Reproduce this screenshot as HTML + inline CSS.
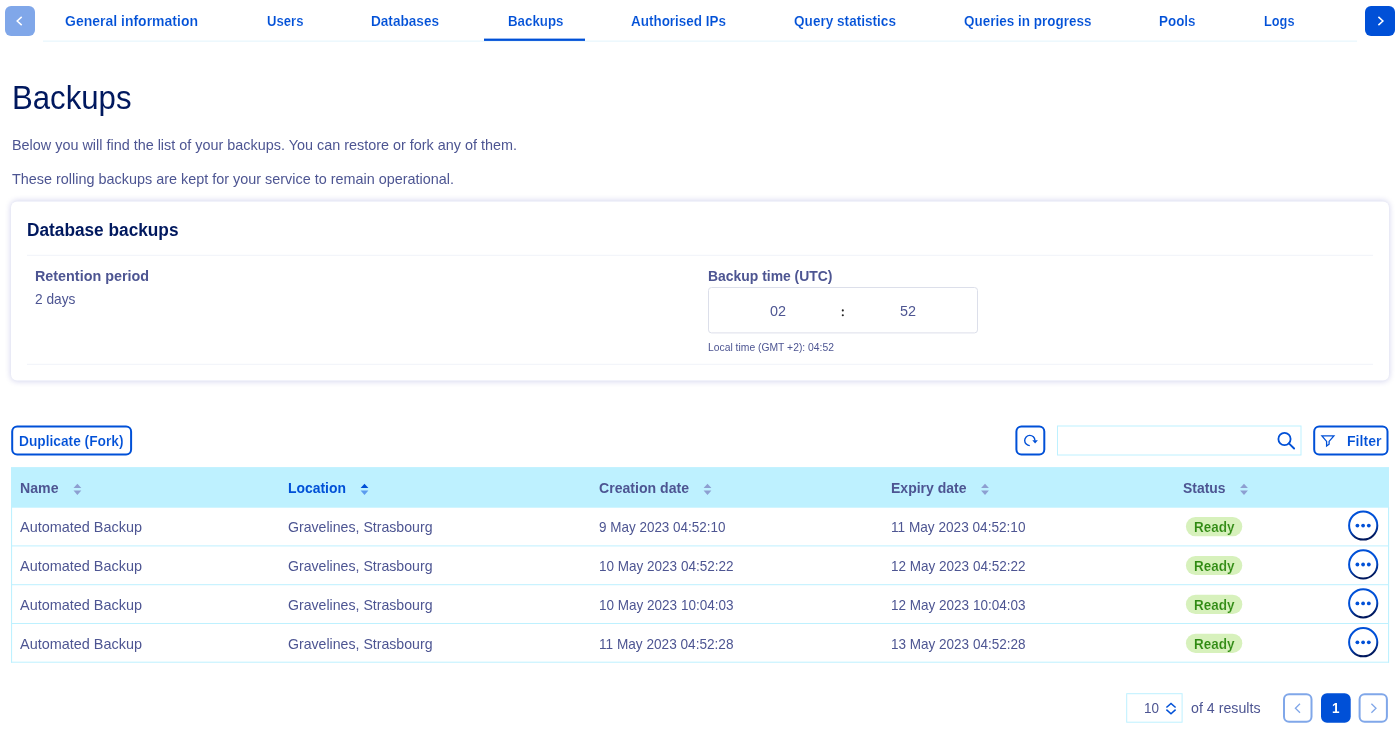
<!DOCTYPE html>
<html lang="en">
<head>
<meta charset="utf-8">
<title>Backups</title>
<style>
html,body{margin:0;padding:0;background:#fff;}
body{width:1400px;height:730px;position:relative;overflow:hidden;font-family:"Liberation Sans",sans-serif;color:#4d5592;font-size:15px;line-height:20px;}
.a{position:absolute;}
.t{position:absolute;white-space:nowrap;line-height:20px;transform-origin:0 50%;}
.txt{position:absolute;left:0;top:0;width:1400px;height:730px;will-change:transform;}
.card{left:11px;top:201px;width:1378px;height:178.6px;transform:translateY(0.6px);border-radius:6px;background:#fff;box-shadow:0 0 6px 0 rgba(0,14,156,.2);}
</style>
</head>
<body>
<!-- card with soft shadow -->
<div class="a card"></div>
<!-- shapes: nav, rules, buttons, icons, table, pagination -->
<svg class="a" style="left:0;top:0;" width="1400" height="730" viewBox="0 0 1400 730">
<defs><linearGradient id="ring" x1="0" y1="0" x2="0.25" y2="1"><stop offset="0.6" stop-color="#0050d7"/><stop offset="1" stop-color="#00185e"/></linearGradient></defs>
<rect x="43.00" y="40.40" width="1314.00" height="1.60" rx="0" fill="#edf8fd"/>
<rect x="5.00" y="6.00" width="30.00" height="30.00" rx="6" fill="#80a7e9"/>
<path d="M21.7 16.9 L17.2 21 L21.7 25.1" fill="none" stroke="#fff" stroke-width="1.5" />
<rect x="1365.00" y="6.00" width="30.00" height="30.00" rx="6" fill="#0050d7"/>
<path d="M1378.4 16.9 L1382.9 21 L1378.4 25.1" fill="none" stroke="#fff" stroke-width="1.5" />
<rect x="484.00" y="38.60" width="101.00" height="2.30" rx="0" fill="#0050d7"/>
<rect x="27.00" y="254.80" width="1346.00" height="1.00" rx="0" fill="#f0f3f9"/>
<rect x="27.00" y="363.80" width="1346.00" height="1.00" rx="0" fill="#f0f3f9"/>
<rect x="708.50" y="287.50" width="269.00" height="45.40" rx="3" fill="none" stroke="#dcdfea" stroke-width="1"/>
<circle cx="842.8" cy="310.4" r="1.05" fill="#222"/><circle cx="842.8" cy="315.2" r="1.05" fill="#222"/>
<rect x="12.20" y="426.40" width="118.90" height="28.20" rx="5" fill="none" stroke="#0050d7" stroke-width="2"/>
<rect x="1016.40" y="426.40" width="27.90" height="28.20" rx="5" fill="none" stroke="#0050d7" stroke-width="2"/>
<path d="M1029.8 445.6 A5.1 5.1 0 1 1 1034.9 440.4" fill="none" stroke="#0050d7" stroke-width="1.4" />
<path d="M1032.3 440.2 L1037.9 440.2 L1035.1 443.4 Z" fill="#0050d7"  />
<rect x="1057.50" y="426.00" width="243.50" height="29.00" rx="0" fill="none" stroke="#bef1ff" stroke-width="1"/>
<circle cx="1284.5" cy="439" r="6.1" fill="none" stroke="#0050d7" stroke-width="1.8"/>
<path d="M1288.9 443.4 L1294.1 448.5" fill="none" stroke="#0050d7" stroke-width="1.9" stroke-linecap="round"/>
<rect x="1314.20" y="426.50" width="73.30" height="28.00" rx="5" fill="none" stroke="#0050d7" stroke-width="2"/>
<path d="M1321.9 435.8 L1333.9 435.8 L1329.1 441.4 L1329.1 444.2 L1326.6 446 L1326.6 441.4 Z" fill="none" stroke="#0050d7" stroke-width="1.3" />
<rect x="11.00" y="467.10" width="1378.00" height="40.60" rx="0" fill="#bef1ff"/>
<rect x="11.00" y="545.40" width="1378.00" height="1.00" rx="0" fill="#bef1ff"/>
<rect x="11.00" y="584.20" width="1378.00" height="1.00" rx="0" fill="#bef1ff"/>
<rect x="11.00" y="623.00" width="1378.00" height="1.00" rx="0" fill="#bef1ff"/>
<rect x="11.00" y="661.70" width="1378.00" height="1.00" rx="0" fill="#bef1ff"/>
<rect x="11.00" y="507.00" width="1.10" height="155.70" rx="0" fill="#bef1ff"/>
<rect x="1388.00" y="507.00" width="1.10" height="155.70" rx="0" fill="#bef1ff"/>
<path d="M73.5 488.0 L77.4 483.7 L81.3 488.0 Z" fill="#8d9fd1"  />
<path d="M73.5 490.6 L77.4 494.9 L81.3 490.6 Z" fill="#8d9fd1"  />
<path d="M360.6 488.0 L364.5 483.7 L368.4 488.0 Z" fill="#0050d7"  />
<path d="M360.6 490.6 L364.5 494.9 L368.4 490.6 Z" fill="#5b9bef"  />
<path d="M703.6 488.0 L707.5 483.7 L711.4 488.0 Z" fill="#8d9fd1"  />
<path d="M703.6 490.6 L707.5 494.9 L711.4 490.6 Z" fill="#8d9fd1"  />
<path d="M981.1 488.0 L985.0 483.7 L988.9 488.0 Z" fill="#8d9fd1"  />
<path d="M981.1 490.6 L985.0 494.9 L988.9 490.6 Z" fill="#8d9fd1"  />
<path d="M1240.1 488.0 L1244.0 483.7 L1247.9 488.0 Z" fill="#8d9fd1"  />
<path d="M1240.1 490.6 L1244.0 494.9 L1247.9 490.6 Z" fill="#8d9fd1"  />
<rect x="1185.90" y="517.00" width="56.40" height="19.20" rx="9.6" fill="#d7f1bc"/>
<g transform="translate(1363.2,525.5)"><circle r="14.1" fill="#fff" stroke="url(#ring)" stroke-width="2"/><circle cx="-5.8" cy="0.1" r="1.9" fill="#0050d7"/><circle cx="-0.1" cy="0.1" r="1.9" fill="#0050d7"/><circle cx="5.6" cy="0.1" r="1.9" fill="#0050d7"/></g>
<rect x="1185.90" y="555.90" width="56.40" height="19.20" rx="9.6" fill="#d7f1bc"/>
<g transform="translate(1363.2,564.4)"><circle r="14.1" fill="#fff" stroke="url(#ring)" stroke-width="2"/><circle cx="-5.8" cy="0.1" r="1.9" fill="#0050d7"/><circle cx="-0.1" cy="0.1" r="1.9" fill="#0050d7"/><circle cx="5.6" cy="0.1" r="1.9" fill="#0050d7"/></g>
<rect x="1185.90" y="594.80" width="56.40" height="19.20" rx="9.6" fill="#d7f1bc"/>
<g transform="translate(1363.2,603.3)"><circle r="14.1" fill="#fff" stroke="url(#ring)" stroke-width="2"/><circle cx="-5.8" cy="0.1" r="1.9" fill="#0050d7"/><circle cx="-0.1" cy="0.1" r="1.9" fill="#0050d7"/><circle cx="5.6" cy="0.1" r="1.9" fill="#0050d7"/></g>
<rect x="1185.90" y="633.70" width="56.40" height="19.20" rx="9.6" fill="#d7f1bc"/>
<g transform="translate(1363.2,642.2)"><circle r="14.1" fill="#fff" stroke="url(#ring)" stroke-width="2"/><circle cx="-5.8" cy="0.1" r="1.9" fill="#0050d7"/><circle cx="-0.1" cy="0.1" r="1.9" fill="#0050d7"/><circle cx="5.6" cy="0.1" r="1.9" fill="#0050d7"/></g>
<rect x="1126.70" y="693.70" width="55.40" height="28.50" rx="0" fill="none" stroke="#bef1ff" stroke-width="1"/>
<path d="M1166.4 707.5 L1171 703.4 L1175.6 707.5" fill="none" stroke="#0050d7" stroke-width="1.5" />
<path d="M1166.4 709.6 L1171 713.7 L1175.6 709.6" fill="none" stroke="#0050d7" stroke-width="1.5" />
<rect x="1284.00" y="694.20" width="27.50" height="27.50" rx="5" fill="none" stroke="#80a7e9" stroke-width="2"/>
<path d="M1300 703.8 L1295.4 708.3 L1300 712.8" fill="none" stroke="#80a7e9" stroke-width="1.3" />
<rect x="1321.00" y="693.20" width="29.70" height="29.50" rx="6" fill="#0050d7"/>
<rect x="1359.60" y="694.20" width="27.30" height="27.50" rx="5" fill="none" stroke="#80a7e9" stroke-width="2"/>
<path d="M1371.4 703.8 L1376 708.3 L1371.4 712.8" fill="none" stroke="#80a7e9" stroke-width="1.3" />
</svg>
<!-- text -->
<div class="txt">
<div class="t" style="left:65.0px;top:10.50px;font-size:15px;font-weight:700;color:#0050d7;transform:scaleX(0.9331);-webkit-text-stroke:0.15px #fff;">General information</div>
<div class="t" style="left:267.0px;top:10.50px;font-size:15px;font-weight:700;color:#0050d7;transform:scaleX(0.8752);-webkit-text-stroke:0.15px #fff;">Users</div>
<div class="t" style="left:371.0px;top:10.50px;font-size:15px;font-weight:700;color:#0050d7;transform:scaleX(0.9061);-webkit-text-stroke:0.15px #fff;">Databases</div>
<div class="t" style="left:507.5px;top:10.50px;font-size:15px;font-weight:700;color:#0050d7;transform:scaleX(0.8876);-webkit-text-stroke:0.15px #fff;">Backups</div>
<div class="t" style="left:631.0px;top:10.50px;font-size:15px;font-weight:700;color:#0050d7;transform:scaleX(0.8974);-webkit-text-stroke:0.15px #fff;">Authorised IPs</div>
<div class="t" style="left:794.0px;top:10.50px;font-size:15px;font-weight:700;color:#0050d7;transform:scaleX(0.9062);-webkit-text-stroke:0.15px #fff;">Query statistics</div>
<div class="t" style="left:964.0px;top:10.50px;font-size:15px;font-weight:700;color:#0050d7;transform:scaleX(0.8997);-webkit-text-stroke:0.15px #fff;">Queries in progress</div>
<div class="t" style="left:1159.0px;top:10.50px;font-size:15px;font-weight:700;color:#0050d7;transform:scaleX(0.8936);-webkit-text-stroke:0.15px #fff;">Pools</div>
<div class="t" style="left:1264.0px;top:10.50px;font-size:15px;font-weight:700;color:#0050d7;transform:scaleX(0.8509);-webkit-text-stroke:0.15px #fff;">Logs</div>
<div class="t" style="left:11.5px;top:86.62px;font-size:33.7px;color:#00185e;transform:scaleX(0.9248);">Backups</div>
<div class="t" style="left:12.0px;top:134.90px;font-size:15px;color:#4d5592;transform:scaleX(0.9599);">Below you will find the list of your backups. You can restore or fork any of them.</div>
<div class="t" style="left:12.0px;top:168.90px;font-size:15px;color:#4d5592;transform:scaleX(0.9604);">These rolling backups are kept for your service to remain operational.</div>
<div class="t" style="left:26.5px;top:219.60px;font-size:18.75px;font-weight:700;color:#00185e;transform:scaleX(0.9200);">Database backups</div>
<div class="t" style="left:35.0px;top:265.80px;font-size:15px;font-weight:700;color:#4d5592;transform:scaleX(0.9566);">Retention period</div>
<div class="t" style="left:35.0px;top:288.60px;font-size:15px;color:#4d5592;transform:scaleX(0.9162);">2 days</div>
<div class="t" style="left:708.0px;top:265.80px;font-size:15px;font-weight:700;color:#4d5592;transform:scaleX(0.9278);">Backup time (UTC)</div>
<div class="t" style="left:770.3px;top:300.70px;font-size:15px;color:#4d5592;transform:scaleX(0.9588);">02</div>
<div class="t" style="left:900.0px;top:300.70px;font-size:15px;color:#4d5592;transform:scaleX(0.9588);">52</div>
<div class="t" style="left:708.0px;top:337.00px;font-size:11.25px;color:#4d5592;transform:scaleX(0.9194);">Local time (GMT +2): 04:52</div>
<div class="t" style="left:18.6px;top:430.90px;font-size:15px;font-weight:700;color:#0050d7;transform:scaleX(0.9152);-webkit-text-stroke:0.15px #fff;">Duplicate (Fork)</div>
<div class="t" style="left:1347.0px;top:430.90px;font-size:15px;font-weight:700;color:#0050d7;transform:scaleX(0.9404);-webkit-text-stroke:0.15px #fff;">Filter</div>
<div class="t" style="left:20.0px;top:478.10px;font-size:15px;font-weight:700;color:#4d5592;transform:scaleX(0.9423);">Name</div>
<div class="t" style="left:288.0px;top:478.10px;font-size:15px;font-weight:700;color:#0050d7;transform:scaleX(0.9280);">Location</div>
<div class="t" style="left:599.0px;top:478.10px;font-size:15px;font-weight:700;color:#4d5592;transform:scaleX(0.9389);">Creation date</div>
<div class="t" style="left:891.0px;top:478.10px;font-size:15px;font-weight:700;color:#4d5592;transform:scaleX(0.9335);">Expiry date</div>
<div class="t" style="left:1183.0px;top:478.10px;font-size:15px;font-weight:700;color:#4d5592;transform:scaleX(0.9271);">Status</div>
<div class="t" style="left:20.0px;top:516.80px;font-size:15px;color:#4d5592;transform:scaleX(0.9625);">Automated Backup</div>
<div class="t" style="left:288.0px;top:516.80px;font-size:15px;color:#4d5592;transform:scaleX(0.9419);">Gravelines, Strasbourg</div>
<div class="t" style="left:599.0px;top:516.80px;font-size:15px;color:#4d5592;transform:scaleX(0.8975);">9 May 2023 04:52:10</div>
<div class="t" style="left:891.0px;top:516.80px;font-size:15px;color:#4d5592;transform:scaleX(0.9077);">11 May 2023 04:52:10</div>
<div class="t" style="left:1194.4px;top:517.00px;font-size:15px;font-weight:700;color:#2f8a12;transform:scaleX(0.8994);-webkit-text-stroke:0.15px #d7f1bc;">Ready</div>
<div class="t" style="left:20.0px;top:555.70px;font-size:15px;color:#4d5592;transform:scaleX(0.9625);">Automated Backup</div>
<div class="t" style="left:288.0px;top:555.70px;font-size:15px;color:#4d5592;transform:scaleX(0.9419);">Gravelines, Strasbourg</div>
<div class="t" style="left:599.0px;top:555.70px;font-size:15px;color:#4d5592;transform:scaleX(0.9009);">10 May 2023 04:52:22</div>
<div class="t" style="left:891.0px;top:555.70px;font-size:15px;color:#4d5592;transform:scaleX(0.9009);">12 May 2023 04:52:22</div>
<div class="t" style="left:1194.4px;top:555.90px;font-size:15px;font-weight:700;color:#2f8a12;transform:scaleX(0.8994);-webkit-text-stroke:0.15px #d7f1bc;">Ready</div>
<div class="t" style="left:20.0px;top:594.60px;font-size:15px;color:#4d5592;transform:scaleX(0.9625);">Automated Backup</div>
<div class="t" style="left:288.0px;top:594.60px;font-size:15px;color:#4d5592;transform:scaleX(0.9419);">Gravelines, Strasbourg</div>
<div class="t" style="left:599.0px;top:594.60px;font-size:15px;color:#4d5592;transform:scaleX(0.9009);">10 May 2023 10:04:03</div>
<div class="t" style="left:891.0px;top:594.60px;font-size:15px;color:#4d5592;transform:scaleX(0.9009);">12 May 2023 10:04:03</div>
<div class="t" style="left:1194.4px;top:594.80px;font-size:15px;font-weight:700;color:#2f8a12;transform:scaleX(0.8994);-webkit-text-stroke:0.15px #d7f1bc;">Ready</div>
<div class="t" style="left:20.0px;top:633.50px;font-size:15px;color:#4d5592;transform:scaleX(0.9625);">Automated Backup</div>
<div class="t" style="left:288.0px;top:633.50px;font-size:15px;color:#4d5592;transform:scaleX(0.9419);">Gravelines, Strasbourg</div>
<div class="t" style="left:599.0px;top:633.50px;font-size:15px;color:#4d5592;transform:scaleX(0.9077);">11 May 2023 04:52:28</div>
<div class="t" style="left:891.0px;top:633.50px;font-size:15px;color:#4d5592;transform:scaleX(0.9009);">13 May 2023 04:52:28</div>
<div class="t" style="left:1194.4px;top:633.70px;font-size:15px;font-weight:700;color:#2f8a12;transform:scaleX(0.8994);-webkit-text-stroke:0.15px #d7f1bc;">Ready</div>
<div class="t" style="left:1144.3px;top:698.00px;font-size:15px;color:#4d5592;transform:scaleX(0.8989);">10</div>
<div class="t" style="left:1191.0px;top:698.30px;font-size:15px;color:#4d5592;transform:scaleX(0.9472);">of 4 results</div>
<div class="t" style="left:1332.3px;top:698.30px;font-size:15px;font-weight:700;color:#fff;transform:scaleX(0.8989);">1</div>
</div>
</body>
</html>
